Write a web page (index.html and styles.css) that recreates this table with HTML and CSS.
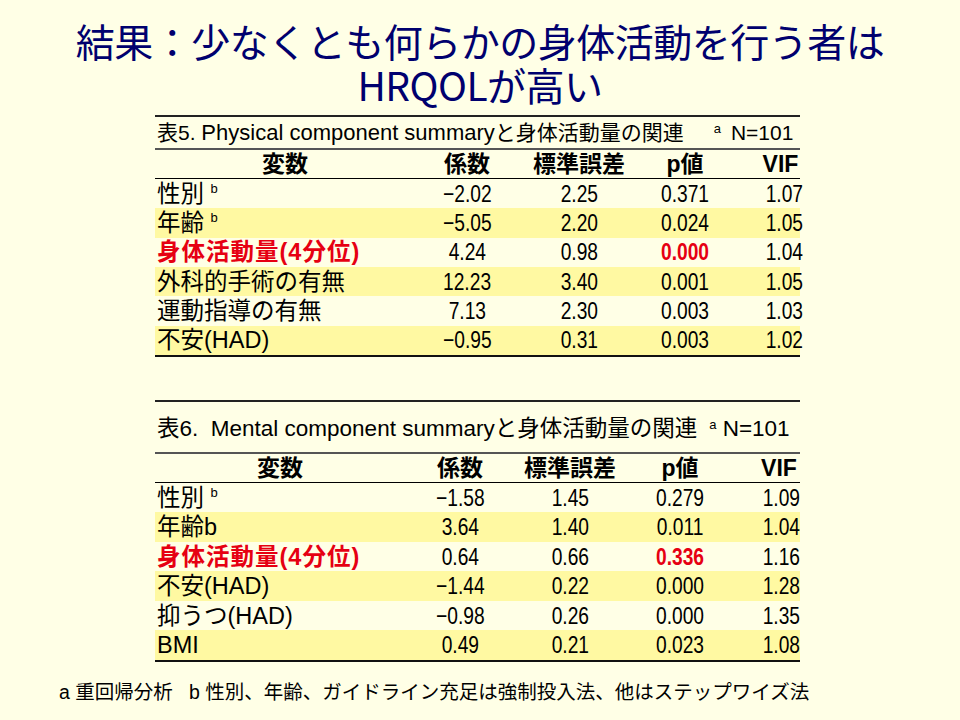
FILE: index.html
```html
<!DOCTYPE html>
<html lang="ja">
<head>
<meta charset="utf-8">
<link rel="stylesheet" href="styles.css">
</head>
<body>
<div class="slide">
  <h1 class="title">結果：少なくとも何らかの身体活動を行う者は<br>HRQOLが高い</h1>

  <section class="table t5">
    <div class="caption">表5. <span class="lat">Physical component summary</span>と身体活動量の関連<sup class="sa">a</sup> N=101</div>
    <div class="row head"><span>変数</span><span>係数</span><span>標準誤差</span><span>p値</span><span>VIF</span></div>
    <div class="row"><span class="label">性別 <sup>b</sup></span><span><i>−2.02</i></span><span><i>2.25</i></span><span><i>0.371</i></span><span><i>1.07</i></span></div>
    <div class="row alt"><span class="label">年齢 <sup>b</sup></span><span><i>−5.05</i></span><span><i>2.20</i></span><span><i>0.024</i></span><span><i>1.05</i></span></div>
    <div class="row"><span class="label red">身体活動量(4分位)</span><span><i>4.24</i></span><span><i>0.98</i></span><span><i class="red">0.000</i></span><span><i>1.04</i></span></div>
    <div class="row alt"><span class="label">外科的手術の有無</span><span><i>12.23</i></span><span><i>3.40</i></span><span><i>0.001</i></span><span><i>1.05</i></span></div>
    <div class="row"><span class="label">運動指導の有無</span><span><i>7.13</i></span><span><i>2.30</i></span><span><i>0.003</i></span><span><i>1.03</i></span></div>
    <div class="row alt"><span class="label">不安(HAD)</span><span><i>−0.95</i></span><span><i>0.31</i></span><span><i>0.003</i></span><span><i>1.02</i></span></div>
  </section>

  <section class="table t6">
    <div class="caption">表6.&nbsp; <span class="lat">Mental component summary</span>と身体活動量の関連<sup class="sa">a</sup> N=101</div>
    <div class="row head"><span>変数</span><span>係数</span><span>標準誤差</span><span>p値</span><span>VIF</span></div>
    <div class="row"><span class="label">性別 <sup>b</sup></span><span><i>−1.58</i></span><span><i>1.45</i></span><span><i>0.279</i></span><span><i>1.09</i></span></div>
    <div class="row alt"><span class="label">年齢b</span><span><i>3.64</i></span><span><i>1.40</i></span><span><i>0.011</i></span><span><i>1.04</i></span></div>
    <div class="row"><span class="label red">身体活動量(4分位)</span><span><i>0.64</i></span><span><i>0.66</i></span><span><i class="red">0.336</i></span><span><i>1.16</i></span></div>
    <div class="row alt"><span class="label">不安(HAD)</span><span><i>−1.44</i></span><span><i>0.22</i></span><span><i>0.000</i></span><span><i>1.28</i></span></div>
    <div class="row"><span class="label">抑うつ(HAD)</span><span><i>−0.98</i></span><span><i>0.26</i></span><span><i>0.000</i></span><span><i>1.35</i></span></div>
    <div class="row alt"><span class="label">BMI</span><span><i>0.49</i></span><span><i>0.21</i></span><span><i>0.023</i></span><span><i>1.08</i></span></div>
  </section>

  <p class="note">a 重回帰分析&nbsp;&nbsp; b 性別、年齢、ガイドライン充足は強制投入法、他はステップワイズ法</p>
</div>
</body>
</html>
```

FILE: styles.css
```css
* { box-sizing: border-box; }

body {
  margin: 0;
  background: #FFFFE6;
  color: #000;
  font-family: "Liberation Sans", "Noto Sans CJK JP", sans-serif;
}

.slide {
  width: 960px;
  height: 720px;
  overflow: hidden;
}

.title {
  margin: 0;
  padding-top: 18px;
  font-family: "Noto Sans CJK JP", sans-serif;
  font-weight: normal;
  font-size: 39px;
  line-height: 44px;
  letter-spacing: -0.5px;
  color: #00006E;
  text-align: center;
}

.table {
  width: 645px;
  margin-left: 155px;
  border-top: 2px solid #222;
  border-bottom: 2px solid #111;
}

.t5 { margin-top: 9px; }
.t6 { margin-top: 43px; }

.caption {
  padding-left: 2px;
  white-space: nowrap;
  border-bottom: 2px solid #555;
}

.t5 .caption {
  height: 33px;
  padding-top: 1px;
  font-size: 21px;
  line-height: 30px;
}
.t5 .caption .lat { font-size: 22px; }
.t5 .caption .sa { margin-left: 30px; margin-right: 4px; }

.t6 .caption {
  height: 52px;
  padding-top: 4px;
  font-size: 22.5px;
  line-height: 46px;
}
.t6 .caption .lat { font-size: 22.5px; }
.t6 .caption .sa { margin-left: 12px; margin-right: 0; }

.caption .sa {
  font-size: 13px;
  vertical-align: 7px;
  line-height: 0;
}

.row {
  display: grid;
  align-items: center;
}

.t5 .row {
  grid-template-columns: 260px 104px 120px 92px 69px;
  height: 29.33px;
}
.t5 .row > span:last-child { padding-left: 30px; }

.t6 .row {
  grid-template-columns: 250px 110px 110px 110px 65px;
  height: 29.5px;
}
.t6 .row > span:last-child { padding-left: 23px; }

.row > span {
  text-align: center;
  white-space: nowrap;
  line-height: 28px;
  height: 28px;
}

.row i {
  display: inline-block;
  font-style: normal;
  font-size: 24px;
  line-height: 28px;
  transform: scaleX(0.8);
}

.row > .label {
  text-align: left;
  padding-left: 2px;
  font-size: 23.5px;
}

.row > .label.red { letter-spacing: 1px; }

.label sup {
  font-size: 13px;
  vertical-align: 9px;
  line-height: 0;
}

.row.head {
  height: 29px;
  border-bottom: 1px solid #000;
  font-weight: bold;
  font-size: 23px;
}

.row.alt { background: #FFF9A2; }

.red {
  color: #E60012;
  font-weight: bold;
}

.note {
  margin: 16px 0 0 59px;
  font-size: 19.5px;
  line-height: 28px;
  white-space: nowrap;
}
```
